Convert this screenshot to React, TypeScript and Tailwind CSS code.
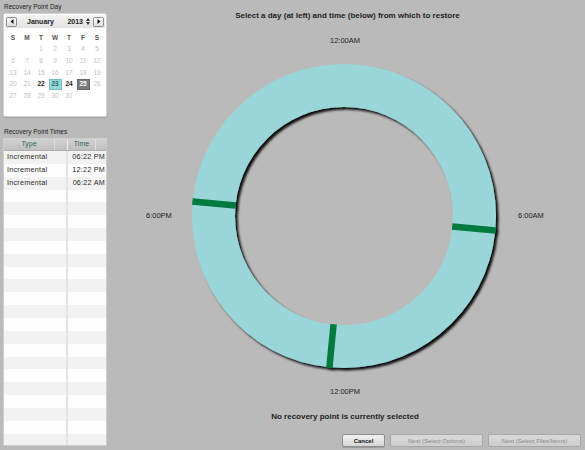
import React from "react";

const FONT = "font-['Liberation_Sans',Arial,sans-serif]";

const weeks: (number | null)[][] = [
  [null, null, 1, 2, 3, 4, 5],
  [6, 7, 8, 9, 10, 11, 12],
  [13, 14, 15, 16, 17, 18, 19],
  [20, 21, 22, 23, 24, 25, 26],
  [27, 28, 29, 30, 31, null, null],
];

function DayCell({ d }: { d: number | null }) {
  if (d === null) return <div className="h-[11.7px]" />;
  let cls = "text-[#c2c2c2]";
  if (d === 22 || d === 24) cls = "text-[#1e1e1e] font-bold";
  if (d === 23)
    cls = "bg-[#9ad6d9] border border-[#74bfc3] text-[#2b6a6c] font-bold";
  if (d === 25) cls = "bg-[#7b7b7b] border border-[#666] text-white font-bold";
  return (
    <div className="h-[11.7px] flex items-center justify-center">
      <div
        className={`w-[13px] h-[11px] flex items-center justify-center text-[6.5px] leading-none ${cls}`}
      >
        {d}
      </div>
    </div>
  );
}

function ArrowBtn({ dir }: { dir: "l" | "r" }) {
  return (
    <div className="w-[11px] h-[10px] rounded-[1.5px] border border-[#8c8c8c] bg-linear-to-b from-[#ffffff] to-[#dcdcdc] flex items-center justify-center">
      <svg width="4" height="5" viewBox="0 0 4 5">
        {dir === "l" ? (
          <polygon points="3.5,0 0.5,2.5 3.5,5" fill="#111" />
        ) : (
          <polygon points="0.5,0 3.5,2.5 0.5,5" fill="#111" />
        )}
      </svg>
    </div>
  );
}

function Calendar() {
  return (
    <div className="w-[104px] h-[104px] mt-[2px] bg-white border border-[#d2d2d2] rounded-[2px] shadow-[0_1px_1px_rgba(0,0,0,0.15)]">
      <div className="mt-[1px] mx-[1px] h-[13px] bg-linear-to-b from-[#f4f4f4] to-[#e2e2e2] flex items-center">
        <div className="ml-[1px]">
          <ArrowBtn dir="l" />
        </div>
        <div className="w-[47px] text-center text-[7px] font-bold text-[#222] leading-none">
          January
        </div>
        <div className="w-[19px] text-right text-[7px] font-bold text-[#222] leading-none">
          2013
        </div>
        <div className="w-[6px] ml-[2px] flex flex-col items-center gap-[1px]">
          <svg width="4" height="3" viewBox="0 0 4 3">
            <polygon points="0,3 2,0 4,3" fill="#333" />
          </svg>
          <svg width="4" height="3" viewBox="0 0 4 3">
            <polygon points="0,0 2,3 4,0" fill="#333" />
          </svg>
        </div>
        <div className="ml-[2px]">
          <ArrowBtn dir="r" />
        </div>
      </div>
      <div className="ml-[2px] w-[98px] mt-[4px] grid grid-cols-7">
        {["S", "M", "T", "W", "T", "F", "S"].map((s, i) => (
          <div
            key={i}
            className="h-[11.7px] flex items-center justify-center text-[6.5px] font-bold text-[#555]"
          >
            {s}
          </div>
        ))}
        {weeks.flat().map((d, i) => (
          <DayCell key={i} d={d} />
        ))}
      </div>
    </div>
  );
}

const rows: [string, string][] = [
  ["Incremental", "06:22 PM"],
  ["Incremental", "12:22 PM"],
  ["Incremental", "06:22 AM"],
];

function TimesTable() {
  const all: ([string, string] | null)[] = [...rows];
  while (all.length < 23) all.push(null);
  return (
    <div className="w-[104px] h-[308px] mt-[2px] bg-white border border-[#cecece] overflow-hidden flex flex-col">
      <div className="h-[12px] shrink-0 bg-linear-to-b from-[#d2d2d2] to-[#bfbfbf] flex items-center text-[7px] text-[#2f6565] border-b border-[#b0b0b0]">
        <div className="w-[50px] text-center">Type</div>
        <div className="w-[1px] h-full bg-[#dedede]" />
        <div className="w-[12px]" />
        <div className="w-[1px] h-full bg-[#e8e8e8]" />
        <div className="w-[27px] text-center">Time</div>
        <div className="w-[1px] h-full bg-[#dedede]" />
        <div className="flex-1" />
      </div>
      <div className="flex-1">
        {all.map((r, i) => (
          <div
            key={i}
            className={`h-[12.85px] flex items-center text-[7.2px] tracking-[0.25px] text-[#2a2a2a] ${
              i % 2 === 0 ? "bg-[#f2f2f2]" : "bg-[#fdfdfd]"
            }`}
          >
            <div className="w-[62px] pl-[3px]">{r ? r[0] : ""}</div>
            <div className="w-[2px] h-full bg-[#e4e4e4]" />
            <div className="flex-1 text-right pr-[1px]">{r ? r[1] : ""}</div>
          </div>
        ))}
      </div>
    </div>
  );
}

function Ring() {
  const ticks = [95.5, 185.5, 275.5];
  return (
    <svg
      width="304"
      height="304"
      viewBox="0 0 304 304"
      className="overflow-visible shrink-0"
    >
      <defs>
        <filter id="sh" x="-10%" y="-10%" width="120%" height="120%">
          <feDropShadow
            dx="2.5"
            dy="2.5"
            stdDeviation="1.1"
            floodColor="#000"
            floodOpacity="0.95"
          />
        </filter>
      </defs>
      <g filter="url(#sh)">
        <path
          fillRule="evenodd"
          fill="#9ad6d9"
          d="M0,152 a152,152 0 1,0 304,0 a152,152 0 1,0 -304,0 Z M43,152 a109,109 0 1,0 218,0 a109,109 0 1,0 -218,0 Z"
        />
        {ticks.map((a) => (
          <rect
            key={a}
            x={152 - 3.25}
            y={-0.3}
            width={6.5}
            height={43.6}
            fill="#007a3d"
            transform={`rotate(${a} 152 152)`}
          />
        ))}
      </g>
    </svg>
  );
}

function Btn({ w, label, primary }: { w: number; label: string; primary?: boolean }) {
  return (
    <div
      style={{ width: w }}
      className={`h-[13px] rounded-[2px] flex items-center justify-center text-[6px] leading-none ${
        primary
          ? "border border-[#8e8e8e] bg-linear-to-b from-[#f2f2f2] to-[#d6d6d6] font-bold text-[#111] shadow-[0_1px_0_rgba(0,0,0,0.15)]"
          : "border border-[#a8a8a8] bg-linear-to-b from-[#d9d9d9] to-[#cdcdcd] text-[#8a8a8a]"
      }`}
    >
      {label}
    </div>
  );
}

export default function App() {
  return (
    <div
      className={`w-[585px] h-[450px] bg-[#bababa] flex overflow-hidden ${FONT}`}
    >
      <div className="w-[110px] shrink-0 flex flex-col pl-[3px]">
        <div className="text-[6.5px] leading-[8px] text-[#222] mt-[3px] ml-[1px]">
          Recovery Point Day
        </div>
        <Calendar />
        <div className="text-[6.5px] leading-[8px] text-[#222] mt-[11px] ml-[1px]">
          Recovery Point Times
        </div>
        <TimesTable />
      </div>
      <div className="flex-1 flex flex-col items-center">
        <div className="mt-[11px] text-[8px] leading-[10px] font-bold text-[#222]">
          Select a day (at left) and time (below) from which to restore
        </div>
        <div className="mt-[15px] mr-[5px] text-[7.5px] leading-[10px] text-[#222]">
          12:00AM
        </div>
        <div className="mt-[18px] mr-[5px] flex items-center">
          <div className="w-[26px] text-[7.5px] leading-[10px] text-[#222]">
            6:00PM
          </div>
          <div className="ml-[20px] mr-[22px]">
            <Ring />
          </div>
          <div className="w-[26px] text-[7.5px] leading-[10px] text-[#222]">
            6:00AM
          </div>
        </div>
        <div className="mt-[19px] mr-[5px] text-[7.5px] leading-[10px] text-[#222]">
          12:00PM
        </div>
        <div className="mt-[15px] mr-[5px] text-[8px] leading-[10px] font-bold text-[#222]">
          No recovery point is currently selected
        </div>
        <div className="mt-[12px] self-stretch flex justify-end gap-[5px] pr-[4px]">
          <Btn w={43} label="Cancel" primary />
          <Btn w={93} label="Next (Select Options)" />
          <Btn w={93} label="Next (Select Files/Items)" />
        </div>
      </div>
    </div>
  );
}
